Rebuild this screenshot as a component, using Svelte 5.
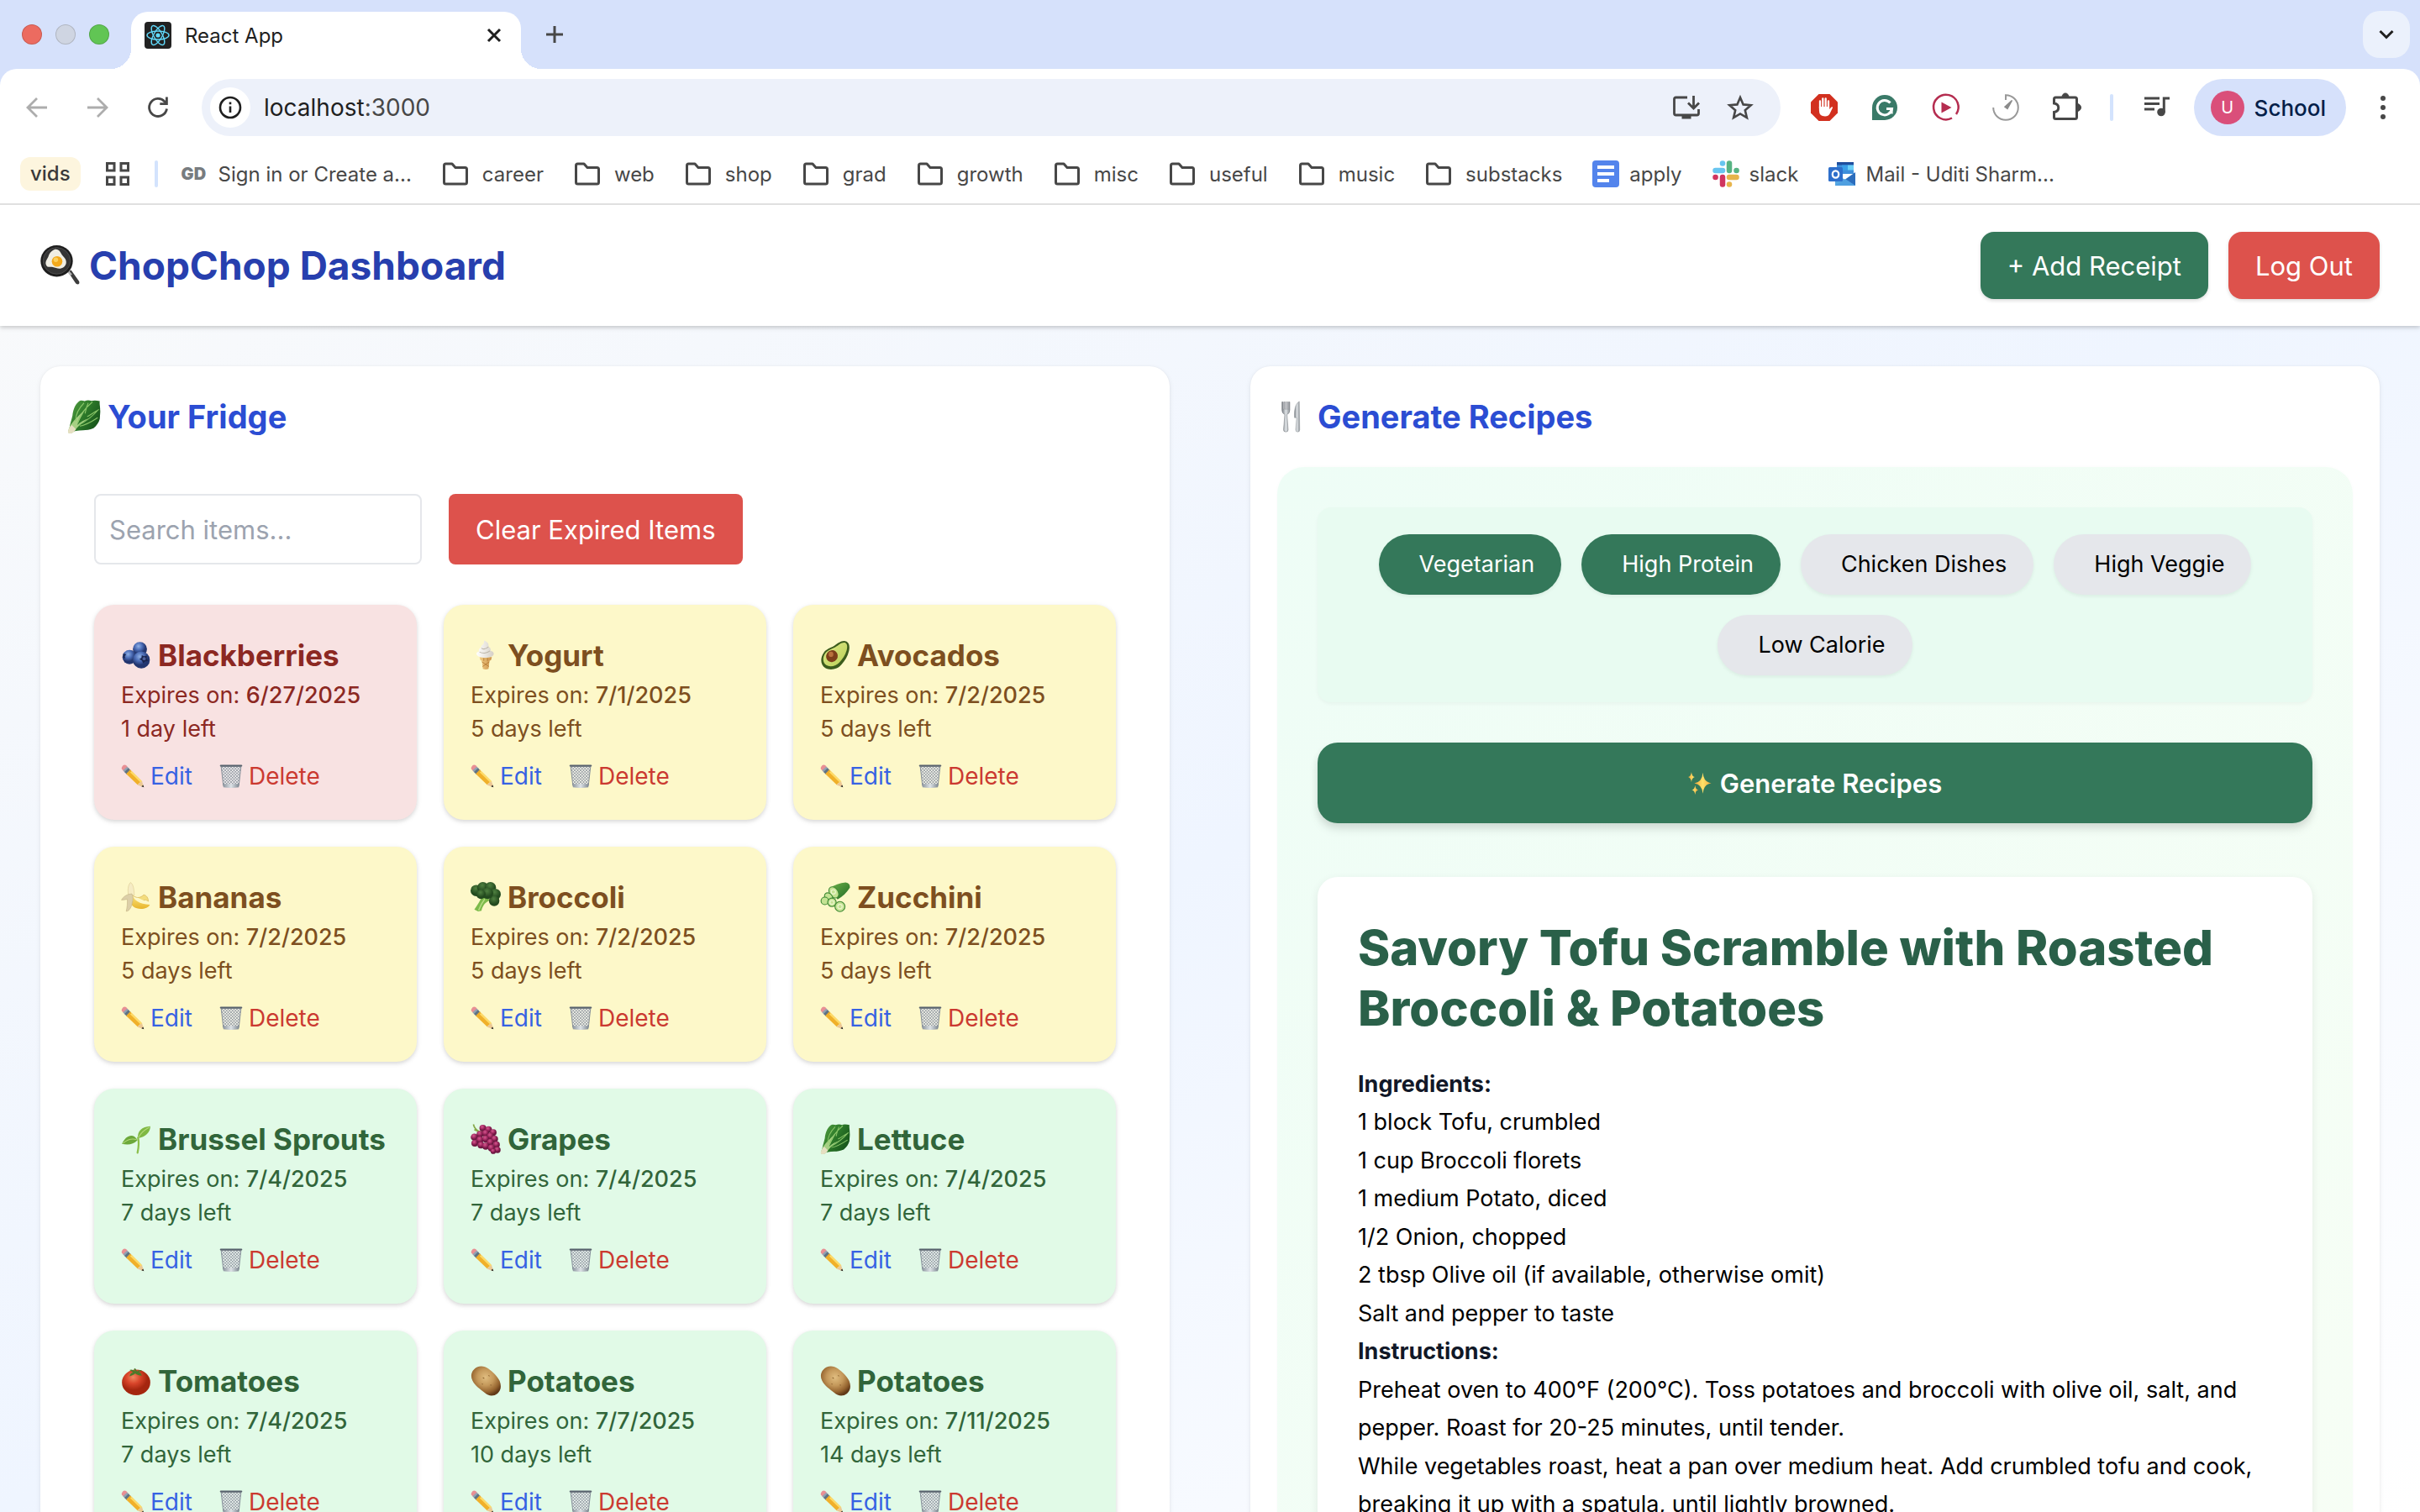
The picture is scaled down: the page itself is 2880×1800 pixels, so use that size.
<script lang="ts">
  type Item = { icon: string; name: string; date: string; left: string; tone: string };

  const items: Item[] = [
    { icon: 'blueberries', name: 'Blackberries', date: '6/27/2025', left: '1 day left', tone: 'red' },
    { icon: 'icecream', name: 'Yogurt', date: '7/1/2025', left: '5 days left', tone: 'yellow' },
    { icon: 'avocado', name: 'Avocados', date: '7/2/2025', left: '5 days left', tone: 'yellow' },
    { icon: 'banana', name: 'Bananas', date: '7/2/2025', left: '5 days left', tone: 'yellow' },
    { icon: 'broccoli', name: 'Broccoli', date: '7/2/2025', left: '5 days left', tone: 'yellow' },
    { icon: 'cucumber', name: 'Zucchini', date: '7/2/2025', left: '5 days left', tone: 'yellow' },
    { icon: 'seedling', name: 'Brussel Sprouts', date: '7/4/2025', left: '7 days left', tone: 'green' },
    { icon: 'grapes', name: 'Grapes', date: '7/4/2025', left: '7 days left', tone: 'green' },
    { icon: 'lettuce', name: 'Lettuce', date: '7/4/2025', left: '7 days left', tone: 'green' },
    { icon: 'tomato', name: 'Tomatoes', date: '7/4/2025', left: '7 days left', tone: 'green' },
    { icon: 'potato', name: 'Potatoes', date: '7/7/2025', left: '10 days left', tone: 'green' },
    { icon: 'potato', name: 'Potatoes', date: '7/11/2025', left: '14 days left', tone: 'green' },
  ];

  const folders = ['career', 'web', 'shop', 'grad', 'growth', 'misc', 'useful', 'music', 'substacks'];

  let filters = $state([
    { label: 'Vegetarian', on: true },
    { label: 'High Protein', on: true },
    { label: 'Chicken Dishes', on: false },
    { label: 'High Veggie', on: false },
    { label: 'Low Calorie', on: false },
  ]);

  const ingredients = [
    '1 block Tofu, crumbled',
    '1 cup Broccoli florets',
    '1 medium Potato, diced',
    '1/2 Onion, chopped',
    '2 tbsp Olive oil (if available, otherwise omit)',
    'Salt and pepper to taste',
  ];

  const steps = [
    'Preheat oven to 400°F (200°C). Toss potatoes and broccoli with olive oil, salt, and pepper. Roast for 20-25 minutes, until tender.',
    'While vegetables roast, heat a pan over medium heat. Add crumbled tofu and cook, breaking it up with a spatula, until lightly browned.',
  ];
</script>

{#snippet emoji(name: string)}
  <svg class="emoji" viewBox="0 0 32 32" aria-hidden="true"><use href="#{name}" /></svg>
{/snippet}

<svg class="sprites" width="0" height="0" aria-hidden="true">
  <defs>
    <radialGradient id="g-berry" cx="40%" cy="30%"><stop offset="0" stop-color="#8fb0e6" /><stop offset="0.55" stop-color="#4a6bb5" /><stop offset="1" stop-color="#23366f" /></radialGradient>
    <radialGradient id="g-tomato" cx="40%" cy="30%"><stop offset="0" stop-color="#f08a62" /><stop offset="0.5" stop-color="#d9452a" /><stop offset="1" stop-color="#a5260f" /></radialGradient>
    <radialGradient id="g-grape" cx="40%" cy="30%"><stop offset="0" stop-color="#d4588f" /><stop offset="0.6" stop-color="#a32a62" /><stop offset="1" stop-color="#6e1742" /></radialGradient>
    <radialGradient id="g-broc" cx="45%" cy="30%"><stop offset="0" stop-color="#4f8040" /><stop offset="1" stop-color="#234a1e" /></radialGradient>
    <radialGradient id="g-potato" cx="48%" cy="38%" r="62%"><stop offset="0" stop-color="#e0bd80" /><stop offset="0.45" stop-color="#c4985a" /><stop offset="0.8" stop-color="#95642f" /><stop offset="1" stop-color="#633a18" /></radialGradient>
    <linearGradient id="g-leaf" x1="0" y1="0" x2="1" y2="0.6"><stop offset="0" stop-color="#57a043" /><stop offset="0.5" stop-color="#2f7d2b" /><stop offset="1" stop-color="#17561b" /></linearGradient>
    <linearGradient id="g-cone" x1="0" x2="1"><stop offset="0" stop-color="#f2cd85" /><stop offset="1" stop-color="#cb924a" /></linearGradient>
    <linearGradient id="g-cream" x1="0" x2="1"><stop offset="0" stop-color="#ffffff" /><stop offset="1" stop-color="#d5cfc5" /></linearGradient>
    <linearGradient id="g-avo" x1="0" y1="0" x2="1" y2="1"><stop offset="0" stop-color="#dfe98a" /><stop offset="1" stop-color="#b9cf55" /></linearGradient>
    <linearGradient id="g-banana" x1="0" y1="0" x2="0" y2="1"><stop offset="0" stop-color="#fbe37a" /><stop offset="1" stop-color="#e8b52c" /></linearGradient>
    <linearGradient id="g-cuke" x1="0" y1="0" x2="1" y2="1"><stop offset="0" stop-color="#6fb24a" /><stop offset="1" stop-color="#1f6a25" /></linearGradient>
    <linearGradient id="g-metal" x1="0" x2="1"><stop offset="0" stop-color="#777c82" /><stop offset="0.5" stop-color="#dfe3e6" /><stop offset="1" stop-color="#8c9196" /></linearGradient>
    <linearGradient id="g-bin" x1="0" x2="1"><stop offset="0" stop-color="#8b949e" /><stop offset="0.5" stop-color="#dde2e6" /><stop offset="1" stop-color="#7d8791" /></linearGradient>
    <linearGradient id="g-star" x1="0" x2="1"><stop offset="0" stop-color="#f3a83a" /><stop offset="0.5" stop-color="#ffe169" /><stop offset="1" stop-color="#f3a83a" /></linearGradient>
    <pattern id="p-mesh" width="4" height="4" patternUnits="userSpaceOnUse"><path d="M0 0L4 4M4 0L0 4" stroke="#7d8790" stroke-width="0.8" /></pattern>
  </defs>

  <symbol id="pan" viewBox="0 0 32 32">
    <path d="M22 21l2.400-1.300 6.300 8.800q.8 2-.8 2.500-1.600 0-2.200-1.400z" fill="#3d3d3d" />
    <path d="M21.500 20l3 3.600" stroke="#b7b7b7" stroke-width="1.800" />
    <ellipse cx="13" cy="12.500" rx="12.800" ry="12.500" fill="#1d1d1d" />
    <ellipse cx="13" cy="12.300" rx="10.800" ry="10.500" fill="#343434" stroke="#4f4f4f" stroke-width="0.6" />
    <path d="M10 4c3-2.200 5.500 0 6.500 2.500s4.500 4 4 7.500-4.500 5.500-8 4-7 .5-8-2.500 1.500-5 2-7S8.500 5 10 4z" fill="#f0eee4" />
    <circle cx="13.300" cy="12.800" r="4.200" fill="#f3a91c" /><circle cx="12.300" cy="11.500" r="1.800" fill="#fbd05d" />
  </symbol>

  <symbol id="lettuce" viewBox="0 0 32 32">
    <path d="M2 29.500C2 24 4 20 5 15c.500-5 2-10 6-13.500 2-1.500 4-.5 5.500-.3 2.500-1.200 4.500-1 6.500-.2 2.500-.8 5-.5 8 .2-.5 2.500.5 5 .3 8 .5 3-.3 6-.3 9-1 3.500-3 6.500-6 8.800-3.500 1.500-7 2-10 2-5 .3-9 .8-11.500 2z" fill="url(#g-leaf)" />
    <path d="M.8 30C2 24 7 19 13 13l4-4c-3 6-6 11-7.500 15 3-3 7-5 11-6.500-5 3-9 6.500-11.500 9.500-1.500 2-3 4.500-5.500 5C1.500 32 .6 31.500.8 30z" fill="#a6d083" />
    <path d="M.8 30c.5-2.500 2-4.500 3.500-6l4 4c-1 1.500-2.500 3.700-4.800 4-2 .2-2.900-.5-2.700-2z" fill="#e6dfc2" />
    <path d="M10 22C12 14 18 7 24 2M8 20c0-6 3-12 8-17M11 24c6-3 12-7 19-15M12 25c6-1 11-4 17-8M17 13c1-4 1-6 3-10M19 16c4-2 6-4 10-6" stroke="#8ac669" stroke-width="0.900" fill="none" />
  </symbol>

  <symbol id="fork" viewBox="0 0 32 32">
    <path d="M4.500 2v7.500q0 3.500 2.700 4.500L6 28.500q0 2 2.200 2t2.200-2L9.300 14q2.700-1 2.700-4.500V2h-1.300v7H9.900V2H8.700v7h-.9V2H6.600v7h-.8V2z" fill="url(#g-metal)" stroke="#70757a" stroke-width="0.400" />
    <path d="M21 1.500c-4 2-5 9-4.500 15.500h2L17.600 28.500q0 2 1.900 2t1.900-2z" fill="url(#g-metal)" stroke="#8d9297" stroke-width="0.400" />
  </symbol>

  <symbol id="blueberries" viewBox="0 0 32 32">
    <circle cx="20" cy="9.500" r="7.500" fill="url(#g-berry)" />
    <circle cx="9" cy="18" r="7.500" fill="url(#g-berry)" />
    <path d="M2.500 14l3 1-1.500 2 .5 2.500-2.500-1" fill="#1d2a55" />
    <circle cx="21.500" cy="21" r="9" fill="url(#g-berry)" />
    <path d="M22 16l2.500 1.200 3-.8-.4 3 1.600 2.600-3 .6-2.200 2-1.300-2.900-2.700-1.500 2.200-1.500z" fill="#1b2650" />
    <circle cx="24.500" cy="19.700" r="1.700" fill="#51639d" />
  </symbol>

  <symbol id="icecream" viewBox="0 0 32 32">
    <path d="M9.500 18h13l-.8 3-1.700 1-1 8.500q-3 1.400-6 0L12 22l-1.700-1z" fill="url(#g-cone)" />
    <path d="M12 23l7.500 5M19.800 23l-7 5M14 19v3M18 19v3" stroke="#b67c36" stroke-width="0.800" />
    <path d="M7 16c-1.500-2 0-3.500 2-4-.8-2 .5-3.500 2-4-.3-2.500 4-3 3.200-7.500 3.500 1 5.500 3.500 4.800 6.500 2 .6 2.600 2.500 2 4 3 .8 4.400 3 3 5-2 3.500-15 3.500-17 0z" fill="url(#g-cream)" />
    <path d="M9.500 12.500c3 2 8 1.500 11-1M11.500 8.500c2 1.400 5 1 7.500-1.500" stroke="#bdb6aa" stroke-width="0.900" fill="none" />
  </symbol>

  <symbol id="avocado" viewBox="0 0 32 32">
    <path d="M28 1.500c3 1.500 3.500 6 2.500 10-1.500 6-4 10-8 14.500-4 5-12 6.500-17 3.500C0 26 0 18.500 4 13c3-4 7-4.500 11-7 4-2.500 8-6.500 13-4.500z" fill="#3c5c1d" />
    <path d="M27 3c2 1.200 2 5 1 8-1.500 5-4 8.500-7.500 12.500s-10 5.500-14 3C2.500 24 2.500 18 5.500 14c3-4 6.500-4.200 10.500-6.500C20 5 23.500 1.500 27 3z" fill="url(#g-avo)" />
    <ellipse cx="12.500" cy="17" rx="6" ry="6.500" transform="rotate(35 12.500 17)" fill="#7d3f1a" />
    <ellipse cx="11.500" cy="15" rx="2.500" ry="2.800" fill="#b9713d" />
  </symbol>

  <symbol id="banana" viewBox="0 0 32 32">
    <path d="M8 15C7 9 7 4 10 .500c3 1.500 4 7.500 4 13.500z" fill="#f6ecc4" stroke="#d9c88c" stroke-width="0.500" />
    <path d="M12 14c5 4 9 2.500 12-.5 3 .5 5 3.500 5 7-2-1.500-4-2-5-1" fill="#f3dc7d" stroke="#cfa94a" stroke-width="0.500" />
    <path d="M12 14c2 5 7 9.500 18.500 10-2 5-12.500 6-17.500 2-3-2.500-4-6-4-10z" fill="url(#g-banana)" />
    <path d="M8 13c-3 1-6 3-7.500 6 3 0 5-.5 6-1 .5 4 0 9-1 13 3.500 0 6-5.500 6.500-9.500 1-3 1-6-.5-9z" fill="#dccfa8" stroke="#bfae7e" stroke-width="0.500" />
  </symbol>

  <symbol id="broccoli" viewBox="0 0 32 32">
    <path d="M13 14l8 5c-5 2-8 5-9.500 11.500l-3.500.5-4-2c3-4 6-9 9-15z" fill="#7cba4a" />
    <path d="M15 18c-3 4-5 8-6.500 12" stroke="#b7dd84" stroke-width="1.300" fill="none" />
    <g fill="url(#g-broc)"><circle cx="6" cy="9" r="6" /><circle cx="13" cy="6" r="6" /><circle cx="21" cy="6" r="6" /><circle cx="26" cy="13" r="6" /><circle cx="25" cy="20" r="5.500" /><circle cx="18" cy="12" r="6" /><circle cx="11" cy="13" r="5" /></g>
  </symbol>

  <symbol id="cucumber" viewBox="0 0 32 32">
    <path d="M10 7C15 3 21 1 27 .500q5 1 4.500 5.500c-3 5-8 9.500-13 12.500z" fill="url(#g-cuke)" />
    <g fill="#c5e394" stroke="#3f8a34" stroke-width="1"><ellipse cx="14.500" cy="11" rx="4.500" ry="6.500" transform="rotate(-35 14.500 11)" /><ellipse cx="9" cy="16" rx="3.800" ry="5" transform="rotate(-40 9 16)" /><circle cx="5" cy="20" r="4" /><circle cx="12.500" cy="21.500" r="4.500" /><circle cx="21" cy="26" r="5.300" /></g>
    <g fill="none" stroke="#eef7d2" stroke-width="1"><circle cx="21" cy="26" r="2.300" /><circle cx="12.500" cy="21.500" r="2" /><circle cx="14" cy="10.500" r="2.300" /></g>
  </symbol>

  <symbol id="seedling" viewBox="0 0 32 32">
    <path d="M17.500 30.500c1.500-7 1.500-12 .5-16" stroke="#8cbf4b" stroke-width="2" fill="none" stroke-linecap="round" />
    <path d="M18 15c-1-7 4-12 13-12.500C31 9 26 14 18 15z" fill="#7fb843" />
    <path d="M17.500 17C13 9 5 12 1 21c6 1.500 12 1 16.500-4z" fill="#6ca83a" />
    <path d="M18.500 14.500C21 9 25 6 30 3.500M16.500 16.500C11 15 6 17 2 20.500" stroke="#b6da7c" stroke-width="0.900" fill="none" />
  </symbol>

  <symbol id="grapes" viewBox="0 0 32 32">
    <path d="M3 .500c1 4 3 6 6 7.500M4 6c3 2 7 3 11 2" stroke="#86a84a" stroke-width="1.500" fill="none" />
    <g fill="url(#g-grape)"><circle cx="13" cy="4.500" r="3.600" /><circle cx="19" cy="6" r="3.600" /><circle cx="24" cy="9" r="3.500" /><circle cx="10" cy="11" r="3.600" /><circle cx="4" cy="14" r="3.800" /><circle cx="4.500" cy="20.500" r="3.600" /><circle cx="16" cy="10" r="3.700" /><circle cx="10" cy="17" r="3.800" /><circle cx="21" cy="13" r="3.700" /><circle cx="16" cy="16" r="3.800" /><circle cx="25.500" cy="16" r="3.600" /><circle cx="11" cy="22.500" r="3.600" /><circle cx="21" cy="19.500" r="3.800" /><circle cx="16" cy="23.500" r="3.800" /><circle cx="27.500" cy="22" r="3.500" /><circle cx="22" cy="25.500" r="3.800" /><circle cx="28.500" cy="27.500" r="3.300" /><circle cx="24" cy="29" r="2.800" /></g>
  </symbol>

  <symbol id="tomato" viewBox="0 0 32 32">
    <ellipse cx="16" cy="17.500" rx="15" ry="13.500" fill="url(#g-tomato)" />
    <path d="M16 6.500c-3-2.500-5.500-3-7-2 1.500 1 3 1.600 3.500 2.500-2 .5-3 2-3.500 4 2.500-.5 4.500-1.500 6-3 2 1.500 4.500 2.500 7 2.500-.5-2-1.500-3.500-3.500-4 1.500-.5 2.500-1 3.500-2-2-.5-4 .3-5 1.500L15 2.500l-1.500 1z" fill="#4c7a2a" />
  </symbol>

  <symbol id="potato" viewBox="0 0 32 32">
    <path d="M3.500 4C7-.500 14-.800 19 3c4.500 3.200 9.500 8 11.800 13 2 5 1.500 10-2.300 13.300-4 3.200-9.500 3-13.500-.8C10.500 24.500 5 21.500 2 15.500 0 11.500.500 7 3.500 4z" fill="url(#g-potato)" />
    <path d="M13 12.500l1.500.8M19 10l1 1M21 20l1 .8M12 19l1 .6" stroke="#8c6230" stroke-width="0.900" />
  </symbol>

  <symbol id="pencil" viewBox="0 0 32 32">
    <path d="M1.500 3Q3.500-.500 7 1.200L10.500 5 5 10.500 1.200 6.500Q.3 5 1.500 3z" fill="#e88f94" />
    <path d="M8.300 3L11 5.700 5.500 11 2.800 8.300z" fill="#8fa2b2" /><path d="M10.200 4.900l3 3-5.500 5.400-3-3z" fill="#5f7384" />
    <path d="M12.500 7.200L28 22.500l-5.500 5.300L7 12.800z" fill="#f0b02a" /><path d="M14.500 9.200L29 23.500l-1.800 1.700L12.500 10.800z" fill="#fddb68" />
    <path d="M28.500 22.800L31.200 31l-9-3z" fill="#ecc894" /><path d="M30.200 28l1 3.200-3.400-1.100z" fill="#222" />
  </symbol>

  <symbol id="bin" viewBox="0 0 32 32">
    <path d="M2.500 2h27L26.500 28q-10.500 3.500-21 0z" fill="#f1f4f5" fill-opacity="0.750" />
    <path d="M2.500 2h27L26.500 28q-10.500 3.500-21 0z" fill="url(#p-mesh)" />
    <path d="M5 26.500h22l-.5 4.500q-10.500 1.800-21 0z" fill="url(#g-bin)" />
    <path d="M2.500 3L5.500 29M29.500 3l-3 26" stroke="#838d97" stroke-width="1.100" />
    <rect x="0.800" y="0.500" width="30.400" height="2.600" rx="1.300" fill="#59636e" />
  </symbol>

  <symbol id="sparkles" viewBox="0 0 32 32">
    <path d="M20 2q1 13 11.500 14.500-10.500 1.500-11.500 14-1-12.500-11.500-14 10.500-1.500 11.500-14.500z" fill="url(#g-star)" />
    <path d="M4.500 1q.6 6 4.500 7-3.900 1-4.500 7-.6-6-4.500-7 3.900-1 4.500-7zM9.500 19q.6 6 4.500 6.500-3.900 1-4.500 6.500-.6-5.500-4.500-6.500 3.900-.5 4.500-6.500z" fill="url(#g-star)" />
  </symbol>

  <symbol id="folder" viewBox="0 0 32 32">
    <path d="M4.500 4h7.500l4 4.500h11.500q2 0 2 2v15.500q0 2-2 2h-23q-2 0-2-2v-20q0-2 2-2z" fill="none" stroke="#474747" stroke-width="3" stroke-linejoin="round" />
  </symbol>
</svg>

<div class="window">
  <header class="tabs">
    <div class="lights"><span class="light close"></span><span class="light idle"></span><span class="light zoom"></span></div>
    <div class="tab">
      <svg class="i32" viewBox="0 0 32 32" aria-hidden="true">
        <rect width="32" height="32" rx="4" fill="#222" />
        <g fill="none" stroke="#61dafb" stroke-width="1.400"><ellipse cx="16" cy="16" rx="13" ry="5" /><ellipse cx="16" cy="16" rx="13" ry="5" transform="rotate(60 16 16)" /><ellipse cx="16" cy="16" rx="13" ry="5" transform="rotate(120 16 16)" /></g>
        <circle cx="16" cy="16" r="2.600" fill="#61dafb" />
      </svg>
      <span class="tab-title">React App</span>
      <button class="bare" aria-label="Close tab"><svg class="i32" viewBox="0 0 32 32"><path d="M9 9l14 14M23 9L9 23" stroke="#1f1f1f" stroke-width="3" /></svg></button>
    </div>
    <button class="bare plus" aria-label="New tab"><svg class="i32" viewBox="0 0 32 32"><path d="M16 6v20M6 16h20" stroke="#474747" stroke-width="3" /></svg></button>
    <button class="bare search-tabs" aria-label="Search tabs"><svg class="i32" viewBox="0 0 32 32"><path d="M8.500 12l7.500 7.500 7.500-7.500" fill="none" stroke="#1f1f1f" stroke-width="3" /></svg></button>
  </header>

  <nav class="toolbar" aria-label="Browser toolbar">
    <button class="bare" aria-label="Back"><svg class="i32" viewBox="0 0 32 32"><path d="M28 16H6M16 5L5 16l11 11" fill="none" stroke="#adadad" stroke-width="2.800" /></svg></button>
    <button class="bare" aria-label="Forward"><svg class="i32" viewBox="0 0 32 32"><path d="M4 16h22M16 5l11 11-11 11" fill="none" stroke="#adadad" stroke-width="2.800" /></svg></button>
    <button class="bare" aria-label="Reload"><svg class="i32" viewBox="0 0 32 32"><path d="M26.500 17.500A10.500 10.500 0 1 1 24 9l2 2" fill="none" stroke="#474747" stroke-width="2.800" /><path d="M27.800 3.500v9.500h-9.500v-2.700h6.700V3.500z" fill="#474747" /></svg></button>
    <div class="omnibox">
      <span class="info"><svg class="i32" viewBox="0 0 32 32"><circle cx="16" cy="16" r="12" fill="none" stroke="#1f1f1f" stroke-width="2.600" /><path d="M16 14.500v7.500M16 9.500v2.700" stroke="#1f1f1f" stroke-width="2.600" /></svg></span>
      <span class="url">localhost<span class="port">:3000</span></span>
      <button class="bare" aria-label="Install app"><svg class="i32" viewBox="0 0 32 32"><path d="M17 4H3.500q-2 0-2 2v17q0 2 2 2h25q2 0 2-2v-5M24.500 2v14M18 10.500l6.500 6.500 6.500-6.500" fill="none" stroke="#474747" stroke-width="2.800" /><path d="M10.500 25h11v4.500h-11z" fill="#474747" /></svg></button>
      <button class="bare" aria-label="Bookmark page"><svg class="i32" viewBox="0 0 32 32"><path d="M16 4l3.600 8.400 9.100.8-6.900 6 2.100 8.900L16 23.400l-7.900 4.700 2.100-8.900-6.900-6 9.100-.8z" fill="none" stroke="#474747" stroke-width="2.600" /></svg></button>
    </div>
    <div class="extensions">
      <svg class="i32" viewBox="0 0 32 32"><path d="M9.500 0h13L32 9.500v13L22.500 32h-13L0 22.500v-13z" fill="#d2301f" /><path d="M11 17V8.500M14.300 15V5.500M17.700 15V5.500M21 17V8.500" stroke="#fff" stroke-width="2.300" stroke-linecap="round" /><path d="M9.900 15h12.200v3l2.400-2.500q1.800-.6 1.500.8l-3.500 7.200q-1.500 3-5.500 3-7.100 0-7.100-7z" fill="#fff" /></svg>
      <svg class="i32" viewBox="0 0 32 32"><path d="M1 31V16A15 15 0 1 1 16 31z" fill="#3a7a68" /><path d="M22.500 10.500A8.700 8.700 0 1 0 24.500 17.500H18" fill="none" stroke="#fff" stroke-width="3" /><path d="M24.500 17v6.500" stroke="#fff" stroke-width="2.200" /></svg>
      <svg class="i32" viewBox="0 0 32 32"><path d="M29 24A14.800 14.800 0 1 0 24 28.500" fill="none" stroke="#b52d50" stroke-width="2.500" /><path d="M11.500 9.500l12 6.500-12 6.500z" fill="#b52d50" /></svg>
      <svg class="i32" viewBox="0 0 32 32"><path d="M16 7V1.200A14.800 14.800 0 1 1 1.200 16" fill="none" stroke="#999" stroke-width="2" /><path d="M23.500 7.500L18 17.500l-3-2.200z" fill="#8b8b8b" stroke="#8b8b8b" stroke-width="1.500" /></svg>
      <svg class="i32" viewBox="0 0 32 32"><path d="M3.500 4h23q2 0 2 2v21.500q0 2-2 2h-23q-2 0-2-2v-6c7-1 7-9.500 0-10.500V6q0-2 2-2z" fill="none" stroke="#474747" stroke-width="3" /><path d="M11 3.500a4 4.500 0 0 1 8 0zM29 11.500a4.500 4.500 0 0 1 0 9z" fill="#474747" stroke="#474747" /></svg>
    </div>
    <span class="rule"></span>
    <button class="bare media" aria-label="Media controls"><svg class="i32" viewBox="0 0 32 32"><path d="M1 5h18M1 11.500h18M1 18h12" stroke="#474747" stroke-width="3" /><circle cx="21" cy="21.500" r="4.800" fill="#474747" /><path d="M24.300 22V5H31" fill="none" stroke="#474747" stroke-width="3" /></svg></button>
    <button class="profile"><span class="avatar">U</span>School</button>
    <button class="bare menu" aria-label="Menu"><svg class="i32" viewBox="0 0 32 32" fill="#474747"><circle cx="16" cy="5" r="3" /><circle cx="16" cy="16" r="3" /><circle cx="16" cy="27" r="3" /></svg></button>
  </nav>

  <nav class="bookmarks" aria-label="Bookmarks">
    <a class="vids" href="#vids">vids</a>
    <button class="bare grid-button" aria-label="Apps"><svg class="i32" viewBox="0 0 32 32"><path d="M3.500 3.500h8.500v8.500H3.500zM20 3.500h8.500v8.500H20zM3.500 20h8.500v8.500H3.500zM20 20h8.500v8.500H20z" fill="none" stroke="#474747" stroke-width="3" /></svg></button>
    <span class="rule"></span>
    <a class="site first" href="#signin"><span class="gd">GD</span>Sign in or Create a...</a>
    {#each folders as name}
      <a class="folder" href="#{name}"><svg class="i32" viewBox="0 0 32 32"><use href="#folder" /></svg>{name}</a>
    {/each}
    <a class="site" href="#apply"><svg class="i32" viewBox="0 0 32 32"><rect width="32" height="32" rx="4" fill="#5384ec" /><path d="M6 8h20M6 16h20M6 24h14" stroke="#fff" stroke-width="4" /></svg>apply</a>
    <a class="site" href="#slack"><svg class="i32" viewBox="0 0 32 32" stroke-width="6.500" stroke-linecap="round"><path d="M20 3.500v8.500" stroke="#57b383" /><path d="M28.500 12h.1" stroke="#57b383" /><path d="M3.500 12h8.500" stroke="#68c5f0" /><path d="M12 3.500v.1" stroke="#68c5f0" /><path d="M12 20v8.500" stroke="#d03560" /><path d="M3.500 20h.1" stroke="#d03560" /><path d="M20 20h8.500" stroke="#e7b44b" /><path d="M20 28.500v.1" stroke="#e7b44b" /></svg>slack</a>
    <a class="site" href="#mail"><svg class="i32" viewBox="0 0 32 32"><path d="M10 2h20v14H10z" fill="#3f8fdb" /><path d="M10 2h20v3.500H10z" fill="#1f4f9e" /><path d="M23 5.500h7v6h-7z" fill="#6bd0f7" /><path d="M16 5.500h7v6h-7z" fill="#3aa0e8" /><path d="M8 16l12 7 12-8v15H8z" fill="#55a7e3" /><path d="M32 14v16L20 22.500z" fill="#2c6dbd" /><path d="M8 30l12-8 12 8z" fill="#4f9fe0" /><rect y="8" width="17" height="17" rx="1.500" fill="#2e6fcb" /><ellipse cx="8.500" cy="16.500" rx="3.700" ry="4.200" fill="none" stroke="#fff" stroke-width="2.300" /></svg>Mail - Uditi Sharm...</a>
  </nav>

  <div class="page">
    <header class="app-header">
      <h1>{@render emoji('pan')}ChopChop Dashboard</h1>
      <div class="actions">
        <button class="btn primary">+ Add Receipt</button>
        <button class="btn danger">Log Out</button>
      </div>
    </header>

    <main>
      <section class="panel">
        <h2>{@render emoji('lettuce')}Your Fridge</h2>
        <div class="fridge">
          <div class="search-row">
            <input type="text" placeholder="Search items..." aria-label="Search items" />
            <button class="clear">Clear Expired Items</button>
          </div>
          <div class="cards">
            {#each items as item}
              <article class="card {item.tone}">
                <h3>{@render emoji(item.icon)}{item.name}</h3>
                <p>Expires on: <strong>{item.date}</strong></p>
                <p>{item.left}</p>
                <div class="links">
                  <button class="bare edit">{@render emoji('pencil')}Edit</button>
                  <button class="bare delete">{@render emoji('bin')}Delete</button>
                </div>
              </article>
            {/each}
          </div>
        </div>
      </section>

      <section class="panel">
        <h2>{@render emoji('fork')}Generate Recipes</h2>
        <div class="generator">
          <div class="filters">
            {#each filters as filter}
              <label class="pill" class:on={filter.on}><input type="checkbox" bind:checked={filter.on} />{filter.label}</label>
            {/each}
          </div>
          <button class="generate">{@render emoji('sparkles')}Generate Recipes</button>
          <article class="recipe">
            <h3>Savory Tofu Scramble with Roasted Broccoli &amp; Potatoes</h3>
            <h4>Ingredients:</h4>
            <ul>{#each ingredients as line}<li>{line}</li>{/each}</ul>
            <h4>Instructions:</h4>
            <ol>{#each steps as line}<li>{line}</li>{/each}</ol>
          </article>
        </div>
      </section>
    </main>
  </div>
</div>

<style>
  :global(body) { margin: 0; }
  * { box-sizing: border-box; }
  h1, h2, h3, h4, p, ul, ol { margin: 0; padding: 0; list-style: none; }
  button, input { font: inherit; }
  button { border: 0; cursor: pointer; }
  a { color: inherit; text-decoration: none; }
  svg { display: block; flex: none; }
  .sprites { position: absolute; }
  .i32 { width: 32px; height: 32px; overflow: visible; }
  .emoji { width: 36px; height: 36px; }
  .bare { display: flex; align-items: center; background: none; padding: 0; color: inherit; }

  .window {
    display: flex;
    flex-direction: column;
    height: 100vh;
    overflow: hidden;
    background: linear-gradient(#d6e1fb 110px, #fff 110px);
    color: #000;
    font-family: Inter, "Liberation Sans", sans-serif;
  }

  .tabs { display: flex; flex: none; align-items: center; height: 82px; padding: 0 12px 0 26px; }
  .lights { display: flex; gap: 16px; margin-right: 26px; }
  .light { width: 24px; height: 24px; border-radius: 50%; border: 1px solid rgb(0 0 0 / 15%); }
  .light.close { background: #ec6b60; }
  .light.idle { background: #cfd5e2; }
  .light.zoom { background: #61c554; }
  .tab {
    position: relative;
    display: flex;
    align-items: center;
    gap: 16px;
    width: 464px;
    height: 68px;
    align-self: flex-end;
    padding: 0 16px 12px;
    background: #fff;
    border-radius: 20px 20px 0 0;
  }
  .tab::before, .tab::after { content: ""; position: absolute; bottom: 0; width: 24px; height: 24px; }
  .tab::before { right: 100%; background: radial-gradient(circle at 0 0, transparent 24px, #fff 24px); }
  .tab::after { left: 100%; background: radial-gradient(circle at 100% 0, transparent 24px, #fff 24px); }
  .tab-title { flex: 1; font-size: 24px; color: #1f1f1f; }
  .plus { margin-left: 24px; }
  .search-tabs { justify-content: center; width: 56px; height: 56px; margin-left: auto; border-radius: 20px; background: #ebf1fc; }

  .toolbar { display: flex; flex: none; align-items: center; gap: 40px; height: 92px; padding: 0 28px; background: #fff; border-radius: 20px 20px 0 0; }
  .omnibox { display: flex; flex: 1; align-items: center; gap: 32px; height: 68px; margin-left: -4px; padding: 0 32px 0 10px; background: #edf1fa; border-radius: 34px; }
  .info { display: flex; align-items: center; justify-content: center; width: 48px; height: 48px; border-radius: 50%; background: #fff; }
  .url { flex: 1; margin-left: -16px; font-size: 28px; color: #1f1f1f; }
  .port { color: #474747; }
  .extensions { display: flex; gap: 40px; margin-left: -4px; }
  .rule { width: 4px; height: 32px; border-radius: 2px; background: #d3e3fd; }
  .toolbar .rule { margin: 0 -4px; }
  .profile { display: flex; align-items: center; gap: 12px; height: 68px; margin-left: -12px; padding: 0 24px 0 20px; border-radius: 34px; background: #d6e1fb; color: #041e49; font-size: 26px; font-weight: 500; }
  .avatar { display: flex; align-items: center; justify-content: center; width: 40px; height: 40px; border-radius: 50%; background: #da4f7a; color: #fff; font-size: 20px; font-weight: 400; }
  .menu { margin-left: -12px; }

  .bookmarks { display: flex; flex: none; align-items: center; height: 70px; padding: 0 24px 2px; border-bottom: 2px solid #e0e0e0; background: #fff; color: #474747; font-size: 24px; white-space: nowrap; }
  .vids { padding: 0 12px; line-height: 40px; border-radius: 12px; background: #fdf5de; color: #3a3a3a; font-weight: 500; }
  .grid-button { margin: 0 28px; }
  .site, .folder { display: flex; align-items: center; gap: 12px; margin-right: 36px; }
  .folder { gap: 16px; }
  .site.first { margin-left: 28px; }
  .gd { width: 32px; font-size: 20px; font-weight: 900; color: #777c80; }

  .page {
    flex: 1;
    min-height: 0;
    overflow: auto;
    scrollbar-width: none;
    background: linear-gradient(to bottom right, #f9fafb, #eff5ff 50%, #fff);
  }
  .app-header { display: flex; align-items: center; justify-content: space-between; padding: 32px 48px; background: #fff; box-shadow: 0 2px 6px rgb(0 0 0 / 14%), 0 2px 4px rgb(0 0 0 / 8%); }
  h1 { display: flex; align-items: center; gap: 10px; font-size: 46px; line-height: 64px; font-weight: 700; color: #273fae; }
  h1 .emoji { width: 48px; height: 48px; }
  .actions { display: flex; gap: 24px; }
  .btn { height: 80px; padding: 0 32px; border-radius: 16px; color: #fff; font-size: 31px; box-shadow: 0 2px 4px rgb(0 0 0 / 14%); }
  .primary { background: #34785a; }
  .danger, .clear { background: #dd524c; }

  main { display: grid; grid-template-columns: minmax(0, 1fr) minmax(0, 1fr); gap: 96px; padding: 48px; }
  .panel { padding: 32px; border-radius: 24px; background: #fff; box-shadow: 0 2px 6px rgb(0 0 0 / 8%), 0 0 2px rgb(0 0 0 / 5%); }
  h2 { display: flex; align-items: center; gap: 8px; margin-bottom: 32px; font-size: 38px; line-height: 56px; font-weight: 700; color: #2b4dd3; }
  h2 .emoji { width: 40px; height: 40px; }
  .fridge { padding: 32px; }
  .search-row { display: flex; gap: 32px; margin-bottom: 48px; }
  .search-row input { width: 390px; height: 84px; padding: 0 16px; border: 2px solid #e5e7eb; border-radius: 8px; background: #fff; font-size: 31px; }
  .search-row input::placeholder { color: #9ca3af; opacity: 1; }
  .clear { padding: 0 32px; border-radius: 8px; color: #fff; font-size: 31px; }
  .cards { display: grid; grid-template-columns: repeat(3, minmax(0, 1fr)); gap: 32px; }
  .card { padding: 32px; border-radius: 24px; font-size: 27px; line-height: 40px; white-space: nowrap; box-shadow: 0 2px 6px rgb(0 0 0 / 10%), 0 2px 4px rgb(0 0 0 / 7%); }
  .card h3 { display: flex; align-items: center; gap: 8px; font-size: 35px; line-height: 56px; font-weight: 700; }
  .card strong { font-weight: 500; }
  .red { background: #f8e2e2; color: #8c2822; }
  .yellow { background: #fdf8c9; color: #7d4f20; }
  .green { background: #e1fae7; color: #31653a; }
  .links { display: flex; gap: 32px; margin-top: 16px; font-size: 28px; line-height: 40px; }
  .links .bare { gap: 7px; }
  .links .emoji { width: 28px; height: 28px; }
  .edit { color: #3662e3; }
  .delete { color: #cb3a31; }

  .generator { padding: 48px; border-radius: 32px; background: linear-gradient(to bottom right, #eefdf6, #f7fef5); box-shadow: 0 0 4px rgb(0 0 0 / 2%); }
  .filters { display: flex; flex-wrap: wrap; justify-content: center; gap: 24px; margin-bottom: 48px; padding: 32px; border-radius: 16px; background: #e8fbf1; box-shadow: 0 2px 4px rgb(0 0 0 / 4%); }
  .pill { position: relative; padding: 0 32px 0 48px; border-radius: 36px; background: #e5e7eb; font-size: 27px; line-height: 72px; box-shadow: 0 2px 4px rgb(0 0 0 / 6%); cursor: pointer; }
  .pill input { position: absolute; opacity: 0; }
  .pill.on { background: #34785a; color: #fff; }
  .generate { display: flex; align-items: center; justify-content: center; gap: 10px; width: 100%; height: 96px; margin-bottom: 64px; border-radius: 24px; background: #34785a; color: #fff; font-size: 31px; font-weight: 600; box-shadow: 0 8px 12px rgb(0 0 0 / 8%), 0 4px 8px rgb(0 0 0 / 8%); }
  .generate .emoji { width: 28px; height: 28px; }
  .recipe { padding: 48px; border-radius: 24px; background: #fff; font-size: 27px; line-height: 1.685; box-shadow: 0 4px 12px rgb(0 0 0 / 8%); }
  .recipe h3 { margin-bottom: 32px; font-size: 58px; line-height: 72px; font-weight: 800; color: #2a6049; }
  .recipe h4 { font-size: 27px; font-weight: 700; color: #111827; }
</style>
